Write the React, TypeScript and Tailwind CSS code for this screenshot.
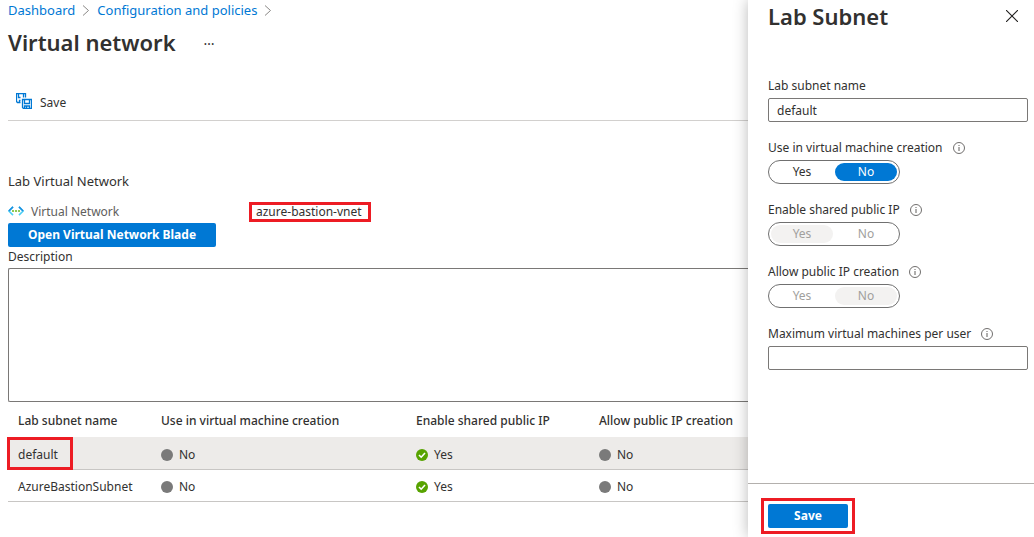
import { useState } from "react";

const crumbs = ["Dashboard", "Configuration and policies"];

const columns = [
  { title: "Lab subnet name", width: "w-[143px]" },
  { title: "Use in virtual machine creation", width: "w-[255px]" },
  { title: "Enable shared public IP", width: "w-[183px]" },
  { title: "Allow public IP creation", width: "w-auto" },
];

const subnets = [
  { name: "default", values: [false, true, false], selected: true },
  { name: "AzureBastionSubnet", values: [false, true, false], selected: false },
];

function Chevron() {
  return (
    <svg className="h-3 w-3" viewBox="0 0 12 12" fill="none" stroke="#8a8886" aria-hidden="true">
      <path d="M3 1.5 8.5 6.5 3 11.5" />
    </svg>
  );
}

function SaveAllIcon() {
  return (
    <svg className="h-4 w-4" viewBox="0 0 16 16" fill="none" stroke="#0078d4" strokeWidth="1.3" aria-hidden="true">
      <path d="M4.5 9.5h-3l-1-1v-8h9v4M2.5.5v4h2M7.5.5v4M3.5 9V7.5h1" />
      <path d="M6.5 6.5h9v9h-8l-1-1zM8.5 6.5v4h5v-4M8.5 15.5v-2.5h5v2.5M10.5 13.5v2" />
    </svg>
  );
}

function NetworkIcon() {
  return (
    <svg className="h-4 w-4" viewBox="0 0 16 16" fill="none" aria-hidden="true">
      <path d="M5 2.9.9 7l4.1 4.1" stroke="#50d0f5" strokeWidth="1.6" />
      <path d="M5 2.9.9 7" stroke="#1b8fe0" strokeWidth="1.6" />
      <path d="M11 2.9 15.1 7 11 11.1" stroke="#50d0f5" strokeWidth="1.6" />
      <path d="M11 2.9 15.1 7" stroke="#1b8fe0" strokeWidth="1.6" />
      <circle cx="5" cy="7" r="1.1" fill="#76bc2d" />
      <circle cx="8" cy="7" r="1.1" fill="#76bc2d" />
      <circle cx="11" cy="7" r="1.1" fill="#76bc2d" />
    </svg>
  );
}

function InfoIcon() {
  return (
    <svg className="h-3 w-3" viewBox="0 0 12 12" fill="none" stroke="#605e5c" aria-hidden="true">
      <circle cx="6" cy="6" r="5.5" strokeWidth="0.9" />
      <path d="M6 5v4M6 3v1" strokeWidth="1" />
    </svg>
  );
}

function Status({ on }: { on: boolean }) {
  return (
    <span className="flex items-center gap-1.5">
      <svg className="h-3 w-3" viewBox="0 0 12 12" fill="none" aria-hidden="true">
        <circle cx="6" cy="6" r="6" fill={on ? "#57a300" : "#7a7a7a"} />
        {on && <path d="M3 6 5.2 8.2 9 4" stroke="#fff" strokeWidth="1.6" />}
      </svg>
      {on ? "Yes" : "No"}
    </span>
  );
}

function Toggle({ label, name, initial, disabled = false }: { label: string; name: string; initial: string; disabled?: boolean }) {
  const [value, setValue] = useState(initial);
  return (
    <fieldset disabled={disabled} className="relative">
      <legend className="mb-0.5 flex h-5 items-center gap-2.5">
        {label}
        <button type="button" aria-label={`About ${label}`}>
          <InfoIcon />
        </button>
      </legend>
      <div className="flex h-6 w-[132px] gap-0.5 rounded-full border border-[#707070] p-0.5">
        {["Yes", "No"].map((option) => (
          <label
            key={option}
            className="flex flex-1 items-center justify-center rounded-full has-checked:bg-[#0078d4] has-checked:text-white has-disabled:text-[#a19f9d] has-checked:has-disabled:bg-[#f3f2f1] has-checked:has-disabled:text-[#a19f9d]"
          >
            <input
              type="radio"
              className="sr-only"
              name={name}
              value={option}
              checked={value === option}
              onChange={() => setValue(option)}
            />
            {option}
          </label>
        ))}
      </div>
    </fieldset>
  );
}

export default function App() {
  return (
    <div className="flex min-h-screen bg-white font-['Noto_Sans','Open_Sans',sans-serif] text-[12px] leading-[18px] text-[#323130]">
      <main className="min-w-0 flex-1 overflow-hidden pl-2">
        <nav aria-label="Breadcrumb" className="flex h-5 items-center gap-[5px] text-[13px] text-[#0078d4]">
          {crumbs.map((crumb) => (
            <span key={crumb} className="flex items-center gap-[5px] whitespace-nowrap">
              <a href="#">{crumb}</a>
              <Chevron />
            </span>
          ))}
        </nav>
        <header className="mt-1.5 flex h-8 items-center gap-7">
          <h1 className="text-[22px] font-semibold whitespace-nowrap">Virtual network</h1>
          <button type="button" aria-label="More actions" className="pb-1 text-[14px]">
            …
          </button>
        </header>
        <div className="mt-7 flex h-[35px] items-center border-b border-[#d2d0ce] pl-2">
          <button type="button" className="flex items-start gap-2 leading-5">
            <SaveAllIcon />
            Save
          </button>
        </div>
        <h2 className="mt-[51px] text-[13px]">Lab Virtual Network</h2>
        <div className="mt-3 flex h-5 items-center">
          <span className="flex w-[241px] items-center gap-[7px] text-[#605e5c]">
            <NetworkIcon />
            Virtual Network
          </span>
          <span className="flex h-5 min-w-[122px] items-center border-3 border-[#ed1c24] px-1 leading-[14px]">
            azure-bastion-vnet
          </span>
        </div>
        <button type="button" className="mt-px h-6 w-[208px] rounded-xs bg-[#0078d4] font-bold text-white">
          Open Virtual Network Blade
        </button>
        <label htmlFor="description" className="block h-[21px] leading-5">
          Description
        </label>
        <textarea
          id="description"
          className="block h-[134px] w-full resize-none rounded-l-xs border border-r-0 border-[#7a7876] p-2"
        />
        <table className="w-full table-fixed border-collapse text-left whitespace-nowrap">
          <thead>
            <tr className="h-[35px]">
              {columns.map((column) => (
                <th key={column.title} className={`${column.width} pt-0.5 pl-2.5 font-medium`}>
                  {column.title}
                </th>
              ))}
            </tr>
          </thead>
          <tbody>
            {subnets.map((subnet) => (
              <tr key={subnet.name} className={`h-8 border-b border-[#c8c6c4] ${subnet.selected ? "bg-[#edebe9]" : ""}`}>
                <td className="relative pt-1 pl-2.5">
                  {subnet.name}
                  {subnet.selected && (
                    <span className="absolute top-0 -bottom-px -left-px w-[66px] border-3 border-[#ed1c24]" />
                  )}
                </td>
                {subnet.values.map((on, i) => (
                  <td key={i} className="pt-1 pl-2.5">
                    <Status on={on} />
                  </td>
                ))}
              </tr>
            ))}
          </tbody>
        </table>
      </main>

      <aside className="relative flex w-[286px] shrink-0 flex-col bg-white shadow-[0_0_14px_rgba(0,0,0,0.28)]">
        <header className="flex h-8 items-center justify-between pr-4 pl-5">
          <h2 className="text-[22px] leading-8 font-semibold">Lab Subnet</h2>
          <button type="button" aria-label="Close">
            <svg className="h-3 w-3" viewBox="0 0 12 12" fill="none" stroke="#201f1e" strokeWidth="1.1" aria-hidden="true">
              <path d="M0 0l12 12M12 0 0 12" />
            </svg>
          </button>
        </header>
        <form className="mt-11 flex flex-1 flex-col gap-4 pr-1.5 pl-5">
          <div>
            <label htmlFor="subnet-name" className="mb-0.5 block h-5 leading-5">
              Lab subnet name
            </label>
            <input
              id="subnet-name"
              defaultValue="default"
              className="block h-6 w-full rounded-xs border border-[#7a7876] px-2"
            />
          </div>
          <Toggle label="Use in virtual machine creation" name="vm-creation" initial="No" />
          <Toggle label="Enable shared public IP" name="shared-ip" initial="Yes" disabled />
          <Toggle label="Allow public IP creation" name="public-ip" initial="No" disabled />
          <div>
            <div className="mb-0.5 flex h-5 items-center gap-2.5">
              <label htmlFor="max-vms">Maximum virtual machines per user</label>
              <button type="button" aria-label="About Maximum virtual machines per user">
                <InfoIcon />
              </button>
            </div>
            <input id="max-vms" className="block h-6 w-full rounded-xs border border-[#7a7876] px-2" />
          </div>
        </form>
        <footer className="flex h-[54px] items-start border-t border-[#b3b0ad] pt-3.5 pl-[13px]">
          <div className="border-3 border-[#ed1c24] px-1 py-[3px]">
            <button type="button" className="block h-6 w-20 rounded-xs bg-[#0078d4] font-bold text-white">
              Save
            </button>
          </div>
        </footer>
      </aside>
    </div>
  );
}
